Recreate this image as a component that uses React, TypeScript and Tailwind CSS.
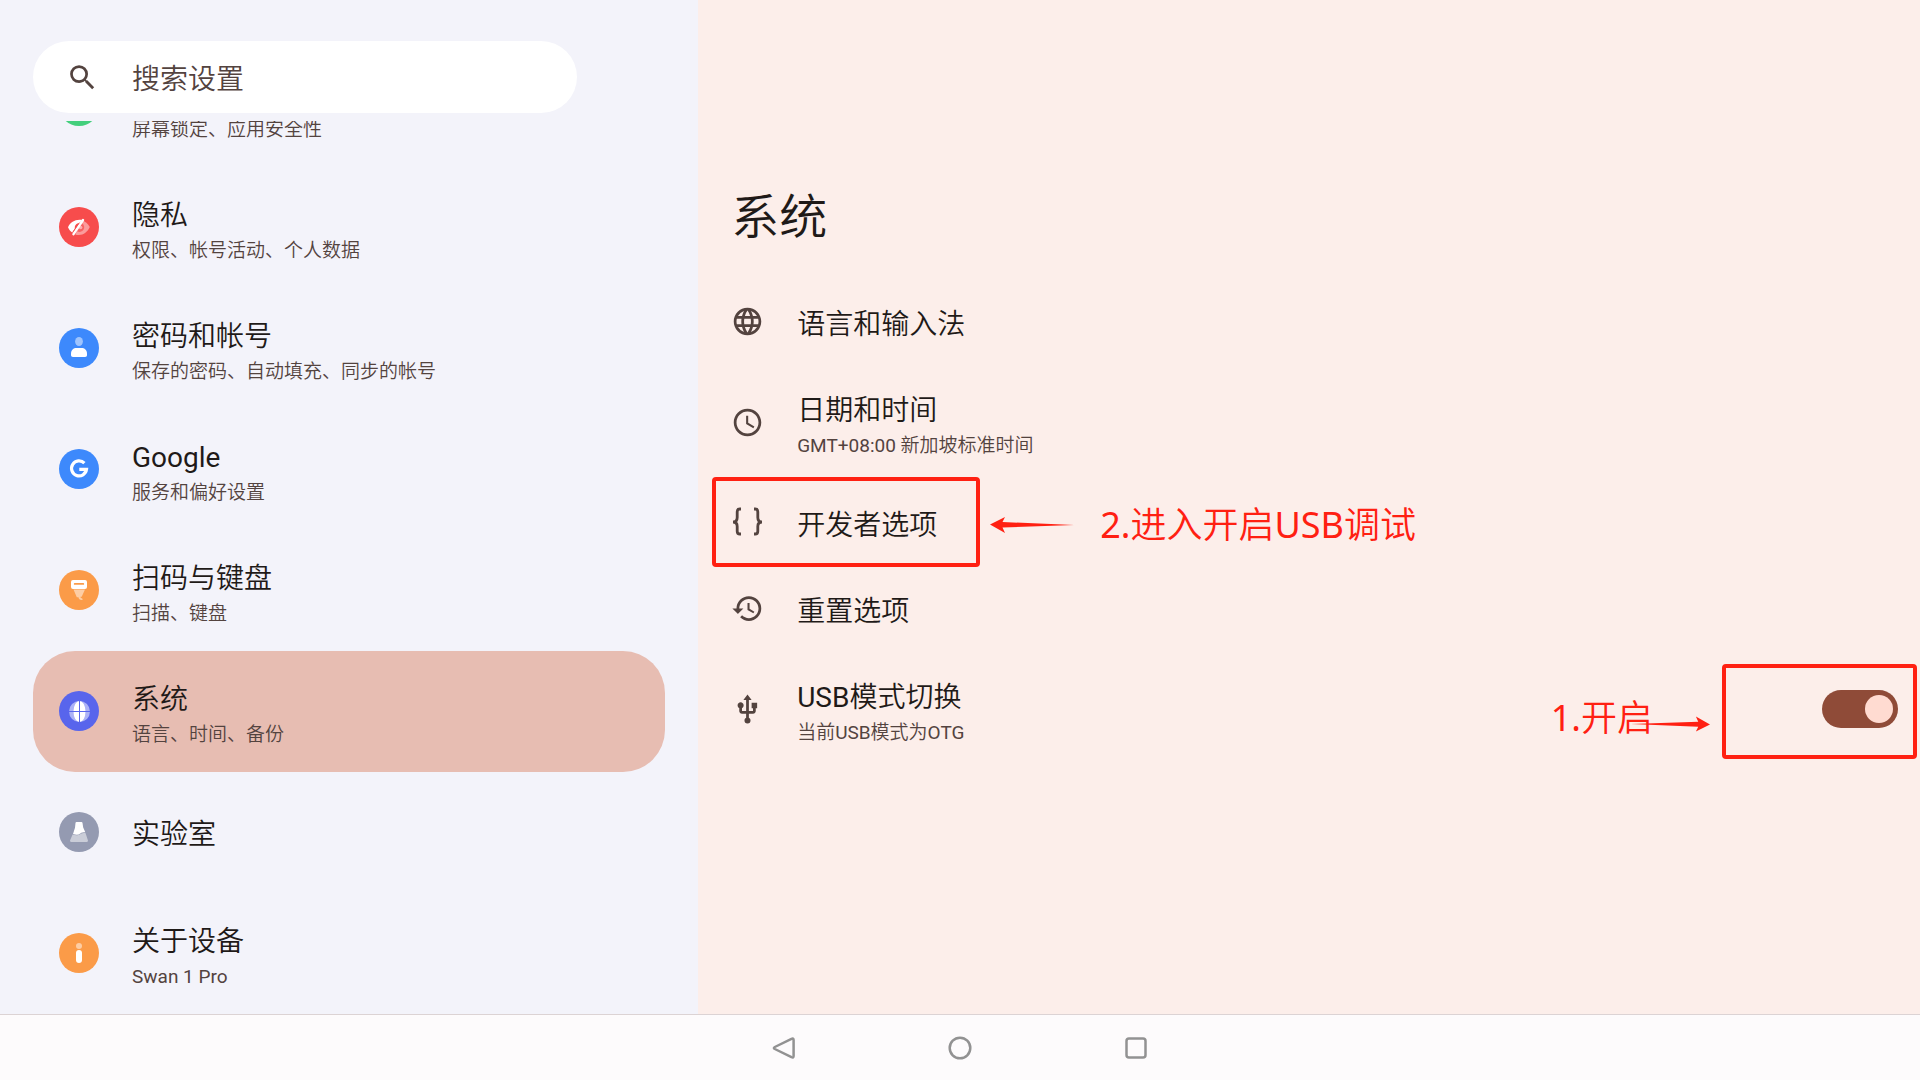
import type { ReactNode } from 'react';
import { MdAccessTime, MdHistory, MdLanguage, MdSearch, MdUsb } from 'react-icons/md';

function Disc({ fill, children }: { fill: string; children?: ReactNode }) {
  return (
    <svg viewBox="0 0 40 40" className="size-10 shrink-0" aria-hidden="true">
      <circle cx="20" cy="20" r="20" fill={fill} />
      {children}
    </svg>
  );
}

const securityIcon = (
  <Disc fill="#43cf7c">
    <path d="M20 9l9 4v6c0 6-4 9-9 11-5-2-9-5-9-11v-6z" fill="#fff" />
  </Disc>
);

const privacyIcon = (
  <Disc fill="#f74c4c">
    <path d="M22.500 13.400c3.800.600 6.500 3.200 8.300 6.600-2.200 4.500-6 8-11 8-1.300 0-2.500-.2-3.500-.6z" fill="#fff" fillOpacity="0.45" />
    <path d="M23 16.200a4.600 4.600 0 0 1-5 8z" fill="#f74c4c" fillOpacity="0.7" />
    <path d="M23 12.900c-6.500-1-11.500 2-14 7.300.9 2.200 2.300 4 4.300 5.300l2.600-4c-.5-3.200 1.600-5.300 4.600-5.200z" fill="#fff" />
    <path d="M24 13L14.500 27.200" stroke="#fff" strokeWidth="2.400" strokeLinecap="round" />
    <path d="M20.400 15.600L14 24.800" stroke="#f74c4c" strokeWidth="0.800" />
    <circle cx="21.600" cy="20.500" r="1.800" fill="#fff" fillOpacity="0.5" />
  </Disc>
);

const accountIcon = (
  <Disc fill="#3d89fc">
    <ellipse cx="20" cy="13.500" rx="3.900" ry="4.600" fill="#fff" fillOpacity="0.5" />
    <path d="M12 27v-1.500c0-3.500 2.500-5.500 5.500-5.500h5c3 0 5.500 2 5.500 5.500V27c0 1.300-.7 2-2 2H14c-1.300 0-2-.7-2-2z" fill="#fff" />
  </Disc>
);

const googleIcon = (
  <Disc fill="#3d89fc">
    <path d="M25.400 14.100A7.500 7.500 0 1 0 27.500 20.300H20.300" fill="none" stroke="#fff" strokeWidth="3.200" />
  </Disc>
);

const scanIcon = (
  <Disc fill="#fb9b48">
    <path d="M14.500 19.500h11.500l-3.300 7.300-1.200 0 .2 1 1.800 1v1.200c-2.300.3-3.800-.5-4-2.700h-1.700z" fill="#fff" fillOpacity="0.5" />
    <path fillRule="evenodd" d="M14 10h12a2 2 0 0 1 2 2v5a2 2 0 0 1-2 2H14a2 2 0 0 1-2-2v-5a2 2 0 0 1 2-2zm1.700 3a.9.9 0 0 0 0 1.800h8.600a.9.9 0 0 0 0-1.800z" fill="#fff" />
  </Disc>
);

const systemIcon = (
  <Disc fill="#5865ec">
    <circle cx="20.500" cy="20.500" r="10.500" fill="#fff" fillOpacity="0.5" />
    <ellipse cx="20.500" cy="20.500" rx="6" ry="10.500" fill="#fff" />
    <path d="M20.500 9.500v22M9.500 20.500h22" stroke="#5865ec" strokeWidth="1" />
  </Disc>
);

const labIcon = (
  <Disc fill="#949ab1">
    <path d="M17.500 10h5c.6 0 .9.3 1 .9l.7 4.600 2.100 4.800c-2.300 0-3.600.2-5 1.200-2 1.500-4 1.500-7.300.5l2-6.300.5-4.800c.1-.6.4-.9 1-.9z" fill="#fff" />
    <path d="M13.600 22.500c3.500 1.300 6 .9 8.200-.7 1.300-.9 2.700-1 4.700-.8l2.400 7.300c.2 1-.2 1.700-1.200 1.700H12.300c-1 0-1.500-.7-1.200-1.700z" fill="#fff" fillOpacity="0.5" />
  </Disc>
);

const aboutIcon = (
  <Disc fill="#fb9b48">
    <circle cx="20" cy="13" r="3" fill="#fff" fillOpacity="0.5" />
    <rect x="17" y="17" width="6" height="13" rx="3" fill="#fff" />
  </Disc>
);

const categories = [
  { icon: securityIcon, title: '安全', summary: '屏幕锁定、应用安全性' },
  { icon: privacyIcon, title: '隐私', summary: '权限、帐号活动、个人数据' },
  { icon: accountIcon, title: '密码和帐号', summary: '保存的密码、自动填充、同步的帐号' },
  { icon: googleIcon, title: 'Google', summary: '服务和偏好设置' },
  { icon: scanIcon, title: '扫码与键盘', summary: '扫描、键盘' },
  { icon: systemIcon, title: '系统', summary: '语言、时间、备份', selected: true },
  { icon: labIcon, title: '实验室' },
  { icon: aboutIcon, title: '关于设备', summary: 'Swan 1 Pro' },
];

function Label({ title, summary }: { title: string; summary?: string }) {
  return (
    <span className={summary ? 'flex flex-col pt-1' : 'flex flex-col pt-1.5'}>
      <span className="text-[28px] leading-[44px] text-[#1f1a18]">{title}</span>
      {summary && <span className="text-[19px] leading-[26px] text-[#53433f]">{summary}</span>}
    </span>
  );
}

function Sidebar() {
  return (
    <aside className="flex min-h-0 flex-col bg-[#f3f3fa]">
      <div className="pt-[41px] pb-2 pr-[121px] pl-[33px]">
        <label className="flex h-[72px] items-center gap-[33px] rounded-full bg-white pl-[33px] text-[#53433f]">
          <MdSearch className="size-[33px] shrink-0" aria-hidden="true" />
          <input
            type="search"
            aria-label="搜索设置"
            placeholder="搜索设置"
            className="h-full min-w-0 flex-1 bg-transparent pt-1 text-[28px] outline-none placeholder:text-[#53433f]"
          />
        </label>
      </div>
      <nav className="min-h-0 flex-1 overflow-hidden px-[33px]">
        <ul className="-mt-[75px]">
          {categories.map((c) => (
            <li key={c.title}>
              <button
                type="button"
                aria-current={c.selected ? 'page' : undefined}
                className={
                  c.selected
                    ? 'flex h-[121px] w-full items-center gap-[33px] rounded-[42px] bg-[#e7bdb2] pb-px pl-[26px] text-left'
                    : 'flex h-[121px] w-full items-center gap-[33px] rounded-[42px] pb-px pl-[26px] text-left'
                }
              >
                {c.icon}
                <Label title={c.title} summary={c.summary} />
              </button>
            </li>
          ))}
        </ul>
      </nav>
    </aside>
  );
}

function BracesIcon() {
  return (
    <svg viewBox="0 0 33 33" className="size-[33px] shrink-0" fill="none" stroke="currentColor" strokeWidth="2.800" aria-hidden="true">
      <path d="M10 3H8.800C7 3 6.200 4 6.200 5.800V11.500C6.200 14.300 5 16 2 16C5 16 6.200 17.700 6.200 20.500V25.200C6.200 27 7 28 8.800 28H10" />
      <path d="M23 3H24.200C26 3 26.800 4 26.800 5.800V11.500C26.800 14.300 28 16 31 16C28 16 26.800 17.700 26.800 20.500V25.200C26.800 27 26 28 24.200 28H23" />
    </svg>
  );
}

function Arrow({ className }: { className: string }) {
  return (
    <svg viewBox="0 0 84 18" className={className} aria-hidden="true">
      <path d="M0 8.500L15 1L12.500 6L84 9L12.500 11.500L15 17Z" fill="#ff2012" />
    </svg>
  );
}

function Note({ children }: { children: ReactNode }) {
  return (
    <span className="font-[Noto_Sans,Noto_Sans_CJK_SC_DemiLight,Noto_Sans_CJK_SC,sans-serif] text-4xl text-[#ff2012]">
      {children}
    </span>
  );
}

function Row({ icon, title, summary, children }: { icon: ReactNode; title: string; summary?: string; children?: ReactNode }) {
  return (
    <li className={summary ? 'relative flex h-[115px] items-center pb-px' : 'relative flex h-[86px] items-center pb-px'}>
      <button type="button" className="flex min-w-0 flex-1 items-center gap-[33px] pl-[33px] text-left text-[#53433f]">
        {icon}
        <Label title={title} summary={summary} />
      </button>
      {children}
    </li>
  );
}

function Detail() {
  return (
    <main className="min-w-0 bg-[#fceeea] pt-[186px]">
      <h1 className="mb-[29px] pl-[33px] text-5xl leading-[64px] text-[#1f1a18]">系统</h1>
      <ul>
        <Row icon={<MdLanguage className="size-[33px] shrink-0" />} title="语言和输入法" />
        <Row icon={<MdAccessTime className="size-[33px] shrink-0" />} title="日期和时间" summary="GMT+08:00 新加坡标准时间" />
        <Row icon={<BracesIcon />} title="开发者选项">
          <div className="pointer-events-none absolute -top-[3px] left-[14px] h-[90px] w-[268px] rounded-sm border-4 border-[#ff2012]" />
          <div className="pointer-events-none absolute inset-y-0 left-[292px] flex items-center gap-[26px] pt-1">
            <Arrow className="h-[18px] w-[84px]" />
            <Note>2.进入开启USB调试</Note>
          </div>
        </Row>
        <Row icon={<MdHistory className="size-[33px] shrink-0" />} title="重置选项" />
        <Row icon={<MdUsb className="size-[33px] shrink-0" />} title="USB模式切换" summary="当前USB模式为OTG">
          <input
            type="checkbox"
            role="switch"
            defaultChecked
            aria-label="USB模式切换"
            className="mr-[22px] h-[38px] w-[76px] shrink-0 appearance-none rounded-full bg-[#8f4b38] before:mt-[5px] before:ml-[5px] before:block before:size-7 before:rounded-full before:bg-[#ffdbd1] checked:before:ml-[43px]"
          />
          <div className="pointer-events-none absolute top-3 right-[3px] h-[95px] w-[195px] rounded-sm border-4 border-[#ff2012]" />
          <div className="pointer-events-none absolute right-[210px] top-[46px] flex items-center">
            <Note>1.开启</Note>
            <Arrow className="-ml-[22px] mt-3 h-[18px] w-[79px] rotate-180" />
          </div>
        </Row>
      </ul>
    </main>
  );
}

function NavBar() {
  return (
    <footer className="flex h-[66px] shrink-0 items-center justify-center gap-36 border-t border-[#dcd3d4] bg-[#fdfbfc] text-[#929292]">
      <button type="button" aria-label="返回">
        <svg viewBox="0 0 32 32" className="size-8" fill="none" stroke="currentColor" strokeWidth="2.500" strokeLinejoin="round">
          <path d="M6.800 15L23.500 6.900Q25.600 6 25.600 8V24Q25.600 26 23.500 25.100L6.800 17Q5 16 6.800 15Z" />
        </svg>
      </button>
      <button type="button" aria-label="主屏幕">
        <svg viewBox="0 0 32 32" className="size-8" fill="none" stroke="currentColor" strokeWidth="2.500">
          <circle cx="16" cy="16" r="10.300" />
        </svg>
      </button>
      <button type="button" aria-label="最近任务">
        <svg viewBox="0 0 32 32" className="size-8" fill="none" stroke="currentColor" strokeWidth="2.500">
          <rect x="6.500" y="6.500" width="19" height="19" rx="2.500" />
        </svg>
      </button>
    </footer>
  );
}

export default function App() {
  return (
    <div className="flex h-screen flex-col overflow-hidden font-[Roboto,Noto_Sans_CJK_SC_DemiLight,Noto_Sans_CJK_SC,sans-serif]">
      <div className="grid min-h-0 flex-1 grid-cols-[4fr_7fr] grid-rows-[minmax(0,1fr)]">
        <Sidebar />
        <Detail />
      </div>
      <NavBar />
    </div>
  );
}
